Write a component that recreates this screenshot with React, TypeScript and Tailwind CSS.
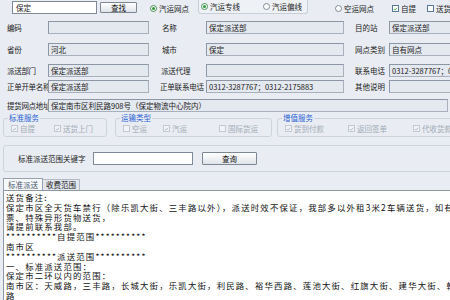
import React from 'react';

const FONT = "font-['Noto_Sans_CJK_SC','Liberation_Sans',sans-serif]";

function Field({ value = '', className = '' }: { value?: string; className?: string }) {
  return (
    <div
      className={`h-[13px] shrink-0 overflow-hidden whitespace-nowrap border border-[#a7b0bc] border-t-[#8c96a4] border-l-[#8c96a4] bg-[#e4e8ef] pl-[2px] text-[7.5px] leading-[11px] text-[#222] ${className}`}
    >
      {value}
    </div>
  );
}

function Btn({ label, className = '' }: { label: string; className?: string }) {
  return (
    <div
      className={`flex shrink-0 items-center justify-center rounded-[1px] border border-[#7d8794] bg-gradient-to-b from-white to-[#dfe4ea] text-[7.5px] text-[#111] ${className}`}
    >
      {label}
    </div>
  );
}

function Radio({ on = false, label }: { on?: boolean; label: string }) {
  return (
    <div className="flex items-center gap-[2px] whitespace-nowrap">
      <span
        className={`flex h-[7px] w-[7px] items-center justify-center rounded-full border bg-white ${on ? 'border-[#4d9455]' : 'border-[#7f8b98]'}`}
      >
        {on && <span className="h-[3px] w-[3px] rounded-full bg-[#2e9a3b]" />}
      </span>
      <span>{label}</span>
    </div>
  );
}

function Check({ on = false, label, disabled = false }: { on?: boolean; label: string; disabled?: boolean }) {
  return (
    <div className={`flex items-center gap-[2px] whitespace-nowrap ${disabled ? 'text-[#a2aab4]' : 'text-[#222]'}`}>
      <span
        className={`flex h-[7px] w-[7px] items-center justify-center border ${disabled ? 'border-[#c2c9d2] bg-[#f1f3f6]' : 'border-[#5a7a9c] bg-white'}`}
      >
        {on && (
          <svg viewBox="0 0 8 8" className="h-[6px] w-[6px]">
            <path
              d="M1.4 4.1 L3.2 5.9 L6.6 2"
              fill="none"
              stroke={disabled ? '#a9b1bb' : '#2c9a3a'}
              strokeWidth="1.3"
            />
          </svg>
        )}
      </span>
      <span>{label}</span>
    </div>
  );
}

function Row({
  top,
  l1,
  v1 = '',
  l2,
  v2 = '',
  l3,
  v3 = '',
  l2pad = 'pl-[13px]',
}: {
  top: string;
  l1: string;
  v1?: string;
  l2: string;
  v2?: string;
  l3: string;
  v3?: string;
  l2pad?: string;
}) {
  return (
    <div className={`flex items-center ${top}`}>
      <span className="w-[48px] shrink-0 whitespace-nowrap pl-[7px] tracking-[-0.3px]">{l1}</span>
      <Field value={v1} className="w-[101px]" />
      <span className={`w-[57px] shrink-0 whitespace-nowrap tracking-[-0.2px] ${l2pad}`}>{l2}</span>
      <Field value={v2} className="w-[138px]" />
      <span className="w-[45px] shrink-0 whitespace-nowrap pl-[11px]">{l3}</span>
      <Field value={v3} className="w-[70px]" />
    </div>
  );
}

function Group({ title, className, children }: { title: string; className: string; children: React.ReactNode }) {
  return (
    <div className={`relative h-[19px] shrink-0 rounded-[3px] border border-[#cdd3dc] ${className}`}>
      <span className="absolute -top-[7px] left-[4px] bg-[#e9edf3] px-[1px] text-[#2b62d4]">{title}</span>
      <div className="flex h-full items-center pl-[7px] pt-[2px]">{children}</div>
    </div>
  );
}

const lines = [
  '送货备注:',
  '保定市区全天货车禁行（除乐凯大街、三丰路以外），派送时效不保证，我部多以外租3米2车辆送货，如有超大',
  '票、特殊异形货物送货，',
  '请提前联系我部。',
  '**********自提范围**********',
  '南市区',
  '**********派送范围**********',
  '一、标准派送范围：',
  '保定市二环以内的范围：',
  '南市区：天威路，三丰路，长城大街，乐凯大街，利民路、裕华西路、莲池大街、红旗大街、建华大街、韩村北',
  '路',
  '北市区：东风路，七一路，朝阳大街，五四路，东三环，北三环，',
];

export default function App() {
  return (
    <div className={`h-[300px] w-[450px] overflow-hidden bg-[#e9edf3] text-[7.5px] text-[#222] ${FONT}`}>
      {/* top search row */}
      <div className="flex h-[15px] items-start">
        <div className="ml-[12px] mt-[1px] h-[13px] w-[85px] shrink-0 border border-[#7f8a98] bg-white pl-[3px] leading-[11px]">
          保定
        </div>
        <Btn label="查找" className="ml-[3px] mt-[2px] h-[11px] w-[37px]" />
        <div className="ml-[13px] mt-[3px] w-[48px] shrink-0">
          <Radio on label="汽运网点" />
        </div>
        <div className="flex h-[14px] w-[110px] shrink-0 items-center rounded-b-[3px] border border-t-0 border-[#c8cfd9] bg-[#eef1f5] pl-[2px]">
          <div className="w-[62px] shrink-0">
            <Radio on label="汽运专线" />
          </div>
          <Radio label="汽运偏线" />
        </div>
        <div className="ml-[27px] mt-[3px] w-[57px] shrink-0">
          <Radio label="空运网点" />
        </div>
        <div className="mt-[3px] w-[35px] shrink-0">
          <Check on label="自提" />
        </div>
        <div className="mt-[3px] shrink-0">
          <Check label="送货上门" />
        </div>
      </div>

      {/* form rows */}
      <Row top="mt-[6px]" l1="编码" l2="名称" v2="保定派送部" l3="目的站" v3="保定派送部" />
      <Row top="mt-[9px]" l1="省份" v1="河北" l2="城市" v2="保定" l3="网点类别" v3="自有网点" />
      <Row top="mt-[8px]" l1="派送部门" v1="保定派送部" l2="派送代理" l2pad="pl-[12px]" l3="联系电话" v3="0312-3287767；0312-2175883" />
      <Row
        top="mt-[3px]"
        l1="正单开单名称"
        v1="保定派送部"
        l2="正单联系电话"
        l2pad="pl-[11px]"
        v2="0312-3287767；0312-2175883"
        l3="其他说明"
      />
      <div className="mt-[6px] flex items-center">
        <span className="w-[48px] shrink-0 whitespace-nowrap pl-[7px] tracking-[-0.3px]">提货网点地址</span>
        <Field value="保定南市区利民路908号（保定物流中心院内）" className="w-[400px]" />
      </div>

      {/* service groups */}
      <div className="mt-[6px] flex">
        <Group title="标准服务" className="ml-[3px] w-[104px]">
          <div className="w-[43px] shrink-0">
            <Check on disabled label="自提" />
          </div>
          <Check on disabled label="送货上门" />
        </Group>
        <Group title="运输类型" className="ml-[8px] w-[157px]">
          <div className="w-[40px] shrink-0">
            <Check disabled label="空运" />
          </div>
          <div className="w-[56px] shrink-0">
            <Check on disabled label="汽运" />
          </div>
          <Check disabled label="国际货运" />
        </Group>
        <Group title="增值服务" className="ml-[5px] w-[180px]">
          <div className="w-[63px] shrink-0">
            <Check on disabled label="货到付款" />
          </div>
          <div className="w-[65px] shrink-0">
            <Check on disabled label="返回签单" />
          </div>
          <Check on disabled label="代收货款" />
        </Group>
      </div>

      {/* keyword search panel */}
      <div className="ml-[3px] mt-[8px] flex h-[27px] w-[452px] items-center rounded-[3px] border border-[#cdd3dc]">
        <span className="w-[89px] shrink-0 whitespace-nowrap pl-[14px]">标准派送范围关键字</span>
        <div className="h-[13px] w-[100px] shrink-0 border border-[#7f8a98] bg-white" />
        <Btn label="查询" className="ml-[9px] h-[13px] w-[55px]" />
      </div>

      {/* tabs */}
      <div className="ml-[3px] mt-[6px] flex h-[12px] items-end">
        <div className="flex h-[12px] w-[40px] items-center justify-center border border-b-0 border-[#98a2ae] bg-[#f6f8fa] text-[#4a5a6e]">
          标准派送
        </div>
        <div className="flex h-[11px] w-[37px] items-center justify-center border border-b-0 border-l-0 border-[#b3bbc6] bg-[#e3e7ed]">
          收费范围
        </div>
      </div>
      <div className="ml-[3px] h-[120px] w-[452px] overflow-hidden border border-[#8f99a6] bg-white pl-[2px] pt-[2px] text-[8.4px] leading-[9.8px] tracking-[1.2px] text-[#111]">
        {lines.map((l, i) => (
          <div key={i} className="whitespace-pre">
            {l}
          </div>
        ))}
      </div>
    </div>
  );
}
